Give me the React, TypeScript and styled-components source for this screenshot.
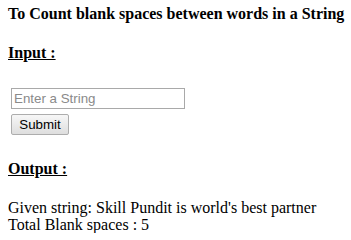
import React, {useState} from "react";
import styled, {createGlobalStyle} from "styled-components";

const GlobalStyle = createGlobalStyle`
  body {
    margin: 0;
    background: #ffffff;
    font-family: "Liberation Serif", "Times New Roman", serif;
    color: #000000;
  }
`;

const Page = styled.div`
  display: flex;
  flex-direction: column;
  align-items: flex-start;
  padding: 5px 8px 0;
`;

const Heading = styled.h4<{ $underline?: boolean; $gap: number }>`
  margin: 0 0 ${p => p.$gap}px;
  font-size: 16px;
  line-height: 18px;
  font-weight: bold;
  white-space: nowrap;
  text-decoration: ${p => (p.$underline ? "underline" : "none")};
`;

const TextInput = styled.input`
  box-sizing: border-box;
  width: 174px;
  height: 21px;
  margin: 0 0 5px 3px;
  padding: 1px 2px;
  border: 1px solid #a9a9a9;
  font-family: "Liberation Sans", Arial, sans-serif;
  font-size: 13.33px;
  color: #000000;
  outline: none;

  &::placeholder {
    color: #8a8a8a;
  }
`;

const SubmitButton = styled.button`
  box-sizing: border-box;
  width: 58px;
  height: 21px;
  margin: 0 0 25px 3px;
  padding: 0 6px;
  border: 1px solid #adadad;
  border-radius: 2px;
  background: linear-gradient(#f7f7f7, #dedede);
  font-family: "Liberation Sans", Arial, sans-serif;
  font-size: 13.33px;
  color: #000000;
`;

const ResultLine = styled.div`
  font-size: 16px;
  line-height: 17px;
  white-space: nowrap;
`;

const countBlankSpaces = (text: string) => text.split("").filter(ch => ch === " ").length;

export default function App() {
    const [value, setValue] = useState<string>("");
    const [given, setGiven] = useState<string>("Skill Pundit is world's best partner");

    const submitHandler = () => {
        if (value.trim() !== "") {
            setGiven(value)
        }
        setValue("")
    }

    return (
        <>
            <GlobalStyle/>
            <Page>
                <Heading $gap={21}>To Count blank spaces between words in a String</Heading>
                <Heading $underline $gap={26}>Input :</Heading>
                <TextInput
                    placeholder="Enter a String"
                    value={value}
                    onChange={e => setValue(e.currentTarget.value)}
                />
                <SubmitButton onClick={submitHandler}>Submit</SubmitButton>
                <Heading $underline $gap={21}>Output :</Heading>
                <ResultLine>Given string: {given}</ResultLine>
                <ResultLine>Total Blank spaces : {countBlankSpaces(given)}</ResultLine>
            </Page>
        </>
    )
}
